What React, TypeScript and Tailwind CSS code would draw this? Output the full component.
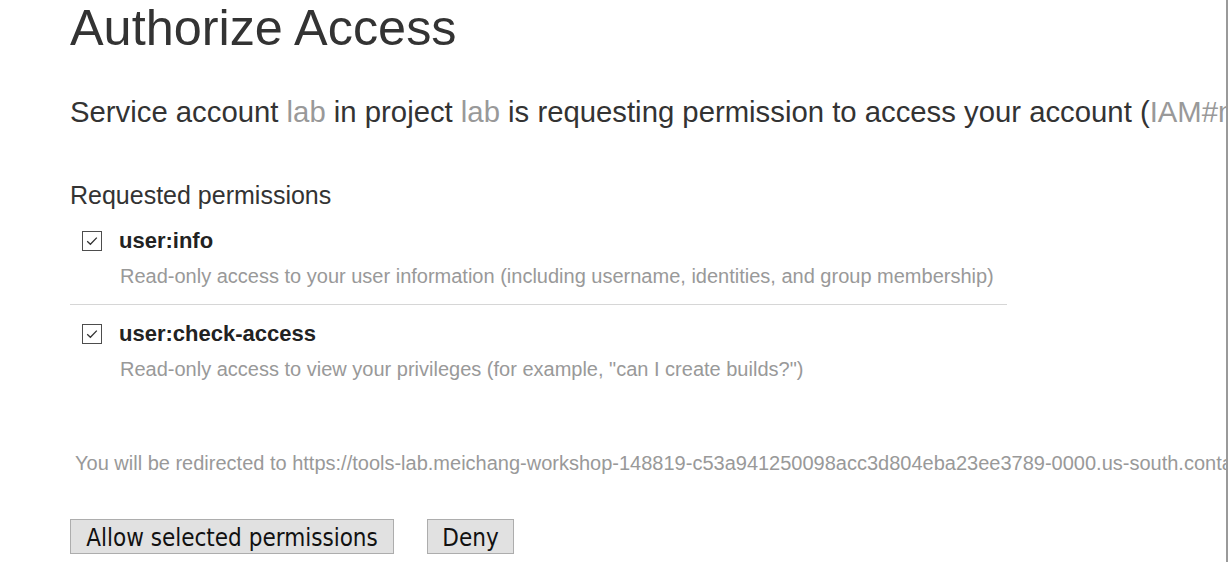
import React from "react";

type Permission = {
  name: string;
  description: string;
};

const permissions: Permission[] = [
  {
    name: "user:info",
    description:
      "Read-only access to your user information (including username, identities, and group membership)",
  },
  {
    name: "user:check-access",
    description:
      'Read-only access to view your privileges (for example, "can I create builds?")',
  },
];

function CheckBox() {
  return (
    <span className="flex h-[20px] w-[20px] shrink-0 items-center justify-center border border-[#4d4d4d] bg-white">
      <svg width="14" height="14" viewBox="0 0 14 14" fill="none">
        <path d="M2.2 7.3 L5.4 10.3 L11.8 3.6" stroke="#333" strokeWidth="1.3" />
      </svg>
    </span>
  );
}

function PermissionItem({ item, last }: { item: Permission; last: boolean }) {
  return (
    <div
      className={
        last
          ? "w-[937px] pt-[18px]"
          : "w-[937px] border-b border-[#d6d6d6] pb-[18px]"
      }
    >
      <label className="flex items-center gap-[17px] pl-[12px]">
        <CheckBox />
        <span className="text-[22px] font-bold leading-[22px] text-[#222]">
          {item.name}
        </span>
      </label>
      <div className="mt-[14px] pl-[50px] text-[20px] leading-[20px] whitespace-nowrap text-[#999]">
        {item.description}
      </div>
    </div>
  );
}

export default function App() {
  return (
    <div
      className="h-[562px] w-[1228px] overflow-hidden border-r-2 border-[#9a9a9a] bg-white pl-[70px] text-[#333]"
      style={{ fontFamily: '"Liberation Sans", Arial, sans-serif' }}
    >
      <h1 className="mt-[3px] text-[50.4px] leading-[50px] whitespace-nowrap">
        Authorize Access
      </h1>
      <p className="mt-[44px] text-[29.3px] leading-[29px] whitespace-nowrap">
        Service account <span className="text-[#999]">lab</span> in project{" "}
        <span className="text-[#999]">lab</span> is requesting permission to
        access your account (<span className="text-[#999]">IAM#masterkey</span>)
      </p>
      <h3 className="mt-[57px] text-[25px] leading-[25px] whitespace-nowrap">
        Requested permissions
      </h3>
      <div className="mt-[22px]">
        {permissions.map((p, i) => (
          <PermissionItem key={p.name} item={p} last={i === permissions.length - 1} />
        ))}
      </div>
      <p className="mt-[74px] pl-[5px] text-[20px] leading-[20px] whitespace-nowrap text-[#999]">
        You will be redirected to
        https://tools-lab.meichang-workshop-148819-c53a941250098acc3d804eba23ee3789-0000.us-south.containers.appdomain.cloud/oauth/callback
      </p>
      <div
        className="mt-[46px] flex gap-[33px] text-[24px] text-[#111]"
        style={{ fontFamily: '"DejaVu Sans Condensed", "DejaVu Sans", sans-serif' }}
      >
        <button className="h-[35px] w-[324px] border border-[#adadad] bg-[#e1e1e1]">
          Allow selected permissions
        </button>
        <button className="h-[35px] w-[87px] border border-[#adadad] bg-[#e1e1e1]">
          Deny
        </button>
      </div>
    </div>
  );
}
